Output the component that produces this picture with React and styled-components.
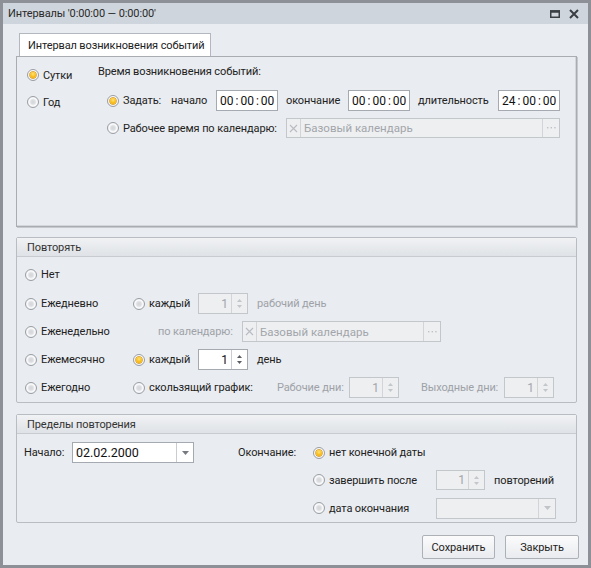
import React from "react";
import styled, { createGlobalStyle, css } from "styled-components";

const Global = createGlobalStyle`
  html, body { margin: 0; padding: 0; background: #e9ecf0; }
  * { box-sizing: border-box; }
  body { font-family: Roboto, "Noto Sans", sans-serif; font-size: 11px; letter-spacing: -0.12px; color: #222; }
`;

const Window = styled.div`
  width: 591px;
  height: 568px;
  border: 3px solid #8d9096;
  background: #e9ecf0;
  display: flex;
  flex-direction: column;
`;

const TitleBar = styled.div`
  height: 21px;
  background: #cfd5dc;
  display: flex;
  align-items: center;
  padding: 0 6px 0 5px;
  color: #2a2a2a;
`;

const TitleText = styled.div`
  flex: 1;
`;

const TitleButton = styled.div`
  width: 16px;
  height: 16px;
  display: flex;
  align-items: center;
  justify-content: center;
  margin-left: 3px;
`;

const Body = styled.div`
  flex: 1;
  padding: 9px 11px 0 13px;
  display: flex;
  flex-direction: column;
`;

const TabStrip = styled.div`
  display: flex;
  padding-left: 3px;
  height: 23px;
`;

const Tab = styled.div`
  background: #fff;
  border: 1px solid #b3b8be;
  border-bottom: none;
  padding: 0 8px;
  display: flex;
  align-items: center;
  width: 192px;
  white-space: nowrap;
  color: #222;
`;

const TabPanel = styled.div`
  height: 171px;
  border: 1px solid #a9adb3;
  box-shadow: 1px 1px 0 #c6c9cd, inset -1px -1px 0 #d3d6da;
  display: flex;
  padding-top: 7px;
`;

const LeftCol = styled.div`
  width: 81px;
  padding: 1px 0 0 10px;
  display: flex;
  flex-direction: column;
  gap: 7px;
`;

const RightCol = styled.div`
  flex: 1;
  display: flex;
  flex-direction: column;
`;

const Caption = styled.div`
  height: 16px;
  line-height: 16px;
  margin-bottom: 10px;
`;

const Row = styled.div`
  display: flex;
  align-items: center;
  height: ${(p) => p.$h || 20}px;
  margin-bottom: ${(p) => p.$mb || 0}px;
  margin-left: ${(p) => p.$ml || 0}px;
  flex: none;
  white-space: nowrap;
`;

const RadioWrap = styled.div`
  display: flex;
  align-items: center;
  gap: 4px;
  width: ${(p) => (p.$w ? `${p.$w}px` : "auto")};
  flex: none;
  color: ${(p) => (p.$disabled ? "#9ea2a8" : "#222")};
`;

const Circle = styled.span`
  width: 12px;
  height: 12px;
  border-radius: 50%;
  border: 1px solid #9a9ea4;
  background: radial-gradient(circle at 50% 50%, #d3d6da 0%, #dcdee1 30%, #fbfbfc 55%, #eef0f2 75%, #d2d5d9 100%);
  position: relative;
  flex: none;
  ${(p) =>
    p.$checked &&
    css`
      background: radial-gradient(circle at 50% 45%, #ffffff 0%, #fbfbfc 60%, #d9dce0 100%);
      &::after {
        content: "";
        position: absolute;
        left: 2px;
        top: 2px;
        width: 6px;
        height: 6px;
        border-radius: 50%;
        background: radial-gradient(circle at 50% 35%, #ffe37a 0%, #f7b912 60%, #e39a00 100%);
        box-shadow: 0 0 0 0.7px #d48f00;
      }
    `}
`;

const Radio = ({ checked, label, w, disabled }) => (
  <RadioWrap $w={w} $disabled={disabled}>
    <Circle $checked={checked} />
    <span>{label}</span>
  </RadioWrap>
);

const Label = styled.div`
  width: ${(p) => (p.$w ? `${p.$w}px` : "auto")};
  margin-left: ${(p) => p.$ml || 0}px;
  flex: none;
  color: ${(p) => (p.$disabled ? "#9ea2a8" : "#222")};
`;

const Box = styled.div`
  height: ${(p) => p.$h || 21}px;
  width: ${(p) => p.$w}px;
  margin-left: ${(p) => p.$ml || 0}px;
  border: 1px solid ${(p) => (p.$disabled ? "#c3c6cb" : "#a5aab0")};
  background: ${(p) => (p.$disabled ? "#eeeff1" : "#fff")};
  display: flex;
  align-items: stretch;
  flex: none;
  color: ${(p) => (p.$disabled ? "#a2a6ab" : "#111")};
`;

const BoxText = styled.div`
  flex: 1;
  display: flex;
  align-items: center;
  padding: 0 ${(p) => (p.$right ? 3 : 2)}px 0 3px;
  justify-content: ${(p) => (p.$right ? "flex-end" : "flex-start")};
  white-space: nowrap;
  overflow: hidden;
  font-size: ${(p) => p.$fs || 11}px;
  letter-spacing: 0;
`;

const BoxButton = styled.div`
  width: ${(p) => p.$w || 16}px;
  flex: none;
  border-${(p) => p.$side || "left"}: 1px solid ${(p) => (p.$disabled ? "#d2d4d8" : "#c9ccd1")};
  display: flex;
  align-items: center;
  justify-content: center;
  flex-direction: column;
  gap: 3px;
`;

const Colon = styled.span`
  margin: 0 2px;
`;

const TimeEdit = ({ value, ml }) => {
  const [h, m, s] = value.split(":");
  return (
    <Box $w={62} $ml={ml}>
      <BoxText $fs={12}>
        {h}
        <Colon>:</Colon>
        {m}
        <Colon>:</Colon>
        {s}
      </BoxText>
    </Box>
  );
};

const Tri = ({ color }) => (
  <svg width="7" height="4" viewBox="0 0 7 4">
    <path d="M0 0 H7 L3.5 4 Z" fill={color} />
  </svg>
);

const SmallTri = ({ dir, color }) => (
  <svg width="5" height="3" viewBox="0 0 5 3">
    {dir === "down" ? <path d="M0 0 H5 L2.5 3 Z" fill={color} /> : <path d="M0 3 H5 L2.5 0 Z" fill={color} />}
  </svg>
);

const Spin = ({ value, w = 50, ml, disabled, h }) => {
  const c = disabled ? "#c3c6ca" : "#5a5e64";
  return (
    <Box $w={w} $ml={ml} $h={h} $disabled={disabled}>
      <BoxText $right $fs={12}>{value}</BoxText>
      <BoxButton $w={16} $disabled={disabled}>
        <SmallTri dir="up" color={c} />
        <SmallTri dir="down" color={c} />
      </BoxButton>
    </Box>
  );
};

const Lookup = ({ w, ml, h = 20 }) => (
  <Box $w={w} $ml={ml} $h={h} $disabled>
    <BoxButton $w={14} $side="right" $disabled>
      <svg width="9" height="9" viewBox="0 0 9 9">
        <path d="M1 1 L8 8 M8 1 L1 8" stroke="#b8bbc0" strokeWidth="1.1" />
      </svg>
    </BoxButton>
    <BoxText $fs={11.5}>Базовый календарь</BoxText>
    <BoxButton $w={17} $disabled>
      <svg width="9" height="2" viewBox="0 0 9 2">
        <rect x="0" y="0" width="1.4" height="1.4" fill="#bfc2c6" />
        <rect x="3.6" y="0" width="1.4" height="1.4" fill="#bfc2c6" />
        <rect x="7.2" y="0" width="1.4" height="1.4" fill="#bfc2c6" />
      </svg>
    </BoxButton>
  </Box>
);

const Combo = ({ value, w, ml, disabled }) => (
  <Box $w={w} $ml={ml} $disabled={disabled}>
    <BoxText $fs={12.5}>{value}</BoxText>
    <BoxButton $w={17} $disabled={disabled}>
      <Tri color={disabled ? "#c0c3c7" : "#777b81"} />
    </BoxButton>
  </Box>
);

const Group = styled.div`
  border: 1px solid #b9bdc3;
  border-radius: 2px;
  height: ${(p) => p.$h}px;
  margin-top: ${(p) => p.$mt}px;
  display: flex;
  flex-direction: column;
  flex: none;
`;

const GroupHeader = styled.div`
  height: 19px;
  background: linear-gradient(#f0f2f4, #dfe2e6);
  border-bottom: 1px solid #c8ccd1;
  padding-left: 10px;
  display: flex;
  align-items: center;
  color: #333;
`;

const GroupBody = styled.div`
  padding: ${(p) => p.$pt || 0}px 0 0 ${(p) => p.$pl || 0}px;
  display: flex;
  flex-direction: ${(p) => p.$dir || "column"};
`;

const Col = styled.div`
  display: flex;
  flex-direction: column;
  width: ${(p) => (p.$w ? `${p.$w}px` : "auto")};
  flex: none;
`;

const Footer = styled.div`
  display: flex;
  justify-content: flex-end;
  gap: 10px;
  margin-top: 12px;
  margin-right: -2px;
`;

const Button = styled.div`
  width: ${(p) => p.$w}px;
  height: 24px;
  border: 1px solid #acb1b7;
  border-radius: 2px;
  background: linear-gradient(#fbfbfc, #e9ebee);
  display: flex;
  align-items: center;
  justify-content: center;
  color: #222;
`;

export default function App() {
  return (
    <>
      <Global />
      <Window>
        <TitleBar>
          <TitleText>Интервалы '0:00:00 — 0:00:00'</TitleText>
          <TitleButton>
            <svg width="10" height="8" viewBox="0 0 10 8">
              <rect x="0.75" y="1" width="8.5" height="6.25" fill="none" stroke="#3a3e44" strokeWidth="1.5" />
              <rect x="0" y="0.25" width="10" height="2.5" fill="#3a3e44" />
            </svg>
          </TitleButton>
          <TitleButton>
            <svg width="10" height="10" viewBox="0 0 10 10">
              <path d="M1 1 L9 9 M9 1 L1 9" stroke="#3a3e44" strokeWidth="2" />
            </svg>
          </TitleButton>
        </TitleBar>
        <Body>
          <TabStrip>
            <Tab>Интервал возникновения событий</Tab>
          </TabStrip>
          <TabPanel>
            <LeftCol>
              <Row>
                <Radio checked label="Сутки" />
              </Row>
              <Row>
                <Radio label="Год" />
              </Row>
            </LeftCol>
            <RightCol>
              <Caption>Время возникновения событий:</Caption>
              <Row $h={21} $ml={9} $mb={7}>
                <Radio checked label="Задать:" w={64} />
                <Label $w={45}>начало</Label>
                <TimeEdit value="00:00:00" />
                <Label $w={62} $ml={8}>окончание</Label>
                <TimeEdit value="00:00:00" />
                <Label $w={80} $ml={8}>длительность</Label>
                <TimeEdit value="24:00:00" />
              </Row>
              <Row $ml={9}>
                <Radio label="Рабочее время по календарю:" w={179} />
                <Lookup w={274} />
              </Row>
            </RightCol>
          </TabPanel>

          <Group $h={166} $mt={10}>
            <GroupHeader>Повторять</GroupHeader>
            <GroupBody $pt={7} $pl={8}>
              <Row $h={21} $mb={8}>
                <Radio label="Нет" />
              </Row>
              <Row $h={21} $mb={7}>
                <Radio label="Ежедневно" w={108} />
                <Radio label="каждый" w={65} />
                <Spin value="1" disabled />
                <Label $ml={9} $disabled>рабочий день</Label>
              </Row>
              <Row $h={21} $mb={7}>
                <Radio label="Еженедельно" w={133} />
                <Label $w={84} $disabled>по календарю:</Label>
                <Lookup w={199} h={21} />
              </Row>
              <Row $h={21} $mb={7}>
                <Radio label="Ежемесячно" w={108} />
                <Radio checked label="каждый" w={65} />
                <Spin value="1" />
                <Label $ml={9}>день</Label>
              </Row>
              <Row $h={21}>
                <Radio label="Ежегодно" w={108} />
                <Radio label="скользящий график:" w={144} />
                <Label $w={72} $disabled>Рабочие дни:</Label>
                <Spin value="1" disabled />
                <Label $w={83} $ml={22} $disabled>Выходные дни:</Label>
                <Spin value="1" disabled />
              </Row>
            </GroupBody>
          </Group>

          <Group $h={109} $mt={11}>
            <GroupHeader>Пределы повторения</GroupHeader>
            <GroupBody $pt={8} $pl={7} $dir="row">
              <Col $w={214}>
                <Row $h={21}>
                  <Label $w={48}>Начало:</Label>
                  <Combo value="02.02.2000" w={122} />
                </Row>
              </Col>
              <Col $w={75}>
                <Row $h={21}>
                  <Label>Окончание:</Label>
                </Row>
              </Col>
              <Col>
                <Row $h={21} $mb={7}>
                  <Radio checked label="нет конечной даты" />
                </Row>
                <Row $h={20} $mb={8}>
                  <Radio label="завершить после" w={123} />
                  <Spin value="1" w={49} h={20} disabled />
                  <Label $ml={9}>повторений</Label>
                </Row>
                <Row $h={20}>
                  <Radio label="дата окончания" w={123} />
                  <Combo value="" w={120} disabled />
                </Row>
              </Col>
            </GroupBody>
          </Group>

          <Footer>
            <Button $w={73}>Сохранить</Button>
            <Button $w={74}>Закрыть</Button>
          </Footer>
        </Body>
      </Window>
    </>
  );
}
